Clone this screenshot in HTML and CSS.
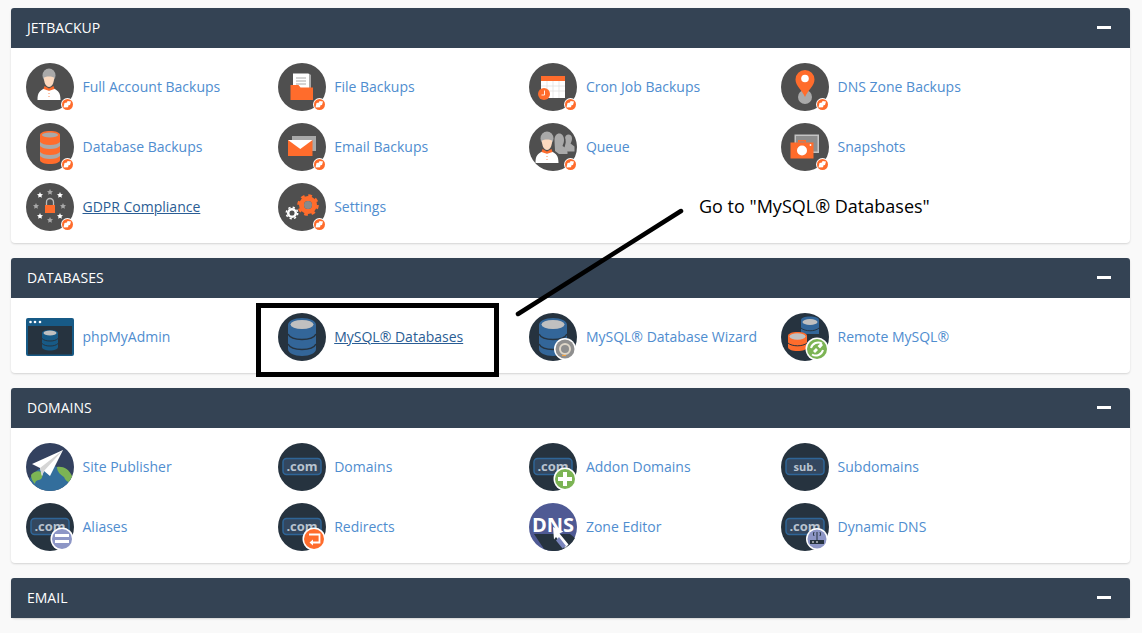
FILE: index.html
```html
<!DOCTYPE html>
<html lang="en">
<head>
    <meta charset="UTF-8">
    <title>cPanel - Tools</title>
    <link rel="stylesheet" href="styles.css">
</head>
<body>
    <svg class="defs" xmlns="http://www.w3.org/2000/svg">
        <symbol id="disc" viewBox="0 0 48 48"><circle cx="24" cy="24" r="24" fill="#4f4f4f"/></symbol>
        <symbol id="navy" viewBox="0 0 48 48"><circle cx="24" cy="24" r="24" fill="#26333f"/></symbol>
        <symbol id="badge" viewBox="0 0 48 48">
            <circle cx="41.500" cy="41.500" r="6.500" fill="#fff"/>
            <circle cx="41.500" cy="41.500" r="5.500" fill="#ff6c2c"/>
            <path d="M37.500 44.500l1-4.500 2.500-.5.500-1.500 3.500.5-1 3.500-1.500.3-.5 2z" fill="#fff"/>
        </symbol>
        <symbol id="person" viewBox="0 0 48 48">
            <ellipse cx="23" cy="12.500" rx="6.500" ry="7" fill="#a9a9a9"/>
            <path d="M18 14.500c2-1.500 8-1.500 10 0 .3 5-2 9.500-5 9.500s-5.300-4.500-5-9.500z" fill="#fbd9bf"/>
            <path d="M11.500 37c0-7 2-9.500 7-11.500l4.500 2 4.500-2c5 2 7 4.500 7 11.500z" fill="#fff"/>
            <path d="M18.500 23l4.500 2.500 4.500-2.500 1 3-4.500 1.500h-2l-4.500-1.500z" fill="#ff6c2c"/>
            <path d="M23 30v.8M23 33v.8" stroke="#ff6c2c" stroke-width="1"/>
        </symbol>
        <symbol id="db" viewBox="0 0 48 48">
            <path d="M10 12c0-4 6-7 14-7s14 3 14 7v24c0 4-6 7-14 7s-14-3-14-7z" fill="#336699"/>
            <ellipse cx="24" cy="11.500" rx="11.500" ry="4.500" fill="#c0c0c0"/>
            <path d="M10 21c2 4 8 5.500 14 5.500S36 25 38 21M10 31c2 4 8 5.500 14 5.500S36 35 38 31" fill="none" stroke="#26333f" stroke-width="1.500"/>
        </symbol>
        <symbol id="com" viewBox="0 0 48 48">
            <rect x="5" y="15.500" width="38" height="16" rx="3.500" fill="#33475f" stroke="#2f6597" stroke-width="1.500"/>
            <text x="24" y="28" class="svg-word">.com</text>
        </symbol>
        <symbol id="star" viewBox="0 0 10 10">
            <path d="M5 0l1.500 3.300 3.500.4-2.600 2.400.7 3.500L5 7.900 1.900 9.600l.7-3.500L0 3.700l3.500-.4z"/>
        </symbol>
    </svg>

    <section class="panel">
        <h2 class="panel-head"><span class="head-title">Jetbackup</span><span class="collapse"></span></h2>
        <div class="panel-body">
            <a class="item" href="#">
                <svg class="icon" viewBox="0 0 48 48"><use href="#disc"/><use href="#person"/><use href="#badge"/></svg>
                <span class="label">Full Account Backups</span>
            </a>
            <a class="item" href="#">
                <svg class="icon" viewBox="0 0 48 48"><use href="#disc"/>
                    <path d="M15 10h15l3 2v18H15z" fill="#a9a9a9"/><path d="M15 11h16v20H15z" fill="#fff"/>
                    <path d="M18 15h10M18 18h10M18 21h10" stroke="#aaa"/>
                    <path d="M12.500 22h8l2 2.500h12.500V37H12.500z" fill="#ff6c2c"/><use href="#badge"/></svg>
                <span class="label">File Backups</span>
            </a>
            <a class="item" href="#">
                <svg class="icon" viewBox="0 0 48 48"><use href="#disc"/>
                    <rect x="12" y="13" width="24" height="22" fill="#fff"/><rect x="12" y="13" width="24" height="5" fill="#ff6c2c"/>
                    <path d="M12 23h24M12 28h24M18 18v17M24 18v17M30 18v17" stroke="#ddd" stroke-width=".7"/>
                    <circle cx="15" cy="31" r="6" fill="#ff6c2c"/><path d="M15.500 27.500V32H12.500" fill="none" stroke="#fff" stroke-width=".9"/>
                    <use href="#badge"/></svg>
                <span class="label">Cron Job Backups</span>
            </a>
            <a class="item" href="#">
                <svg class="icon" viewBox="0 0 48 48"><use href="#disc"/>
                    <circle cx="24" cy="34" r="7" fill="#a9a9a9"/>
                    <path d="M24 34c-3-7-9.500-11-9.500-17.500a9.500 9.500 0 0 1 19 0C33.500 23 27 27 24 34z" fill="#ff6c2c"/>
                    <circle cx="24" cy="15.500" r="3.800" fill="#fff"/><use href="#badge"/></svg>
                <span class="label">DNS Zone Backups</span>
            </a>
            <a class="item" href="#">
                <svg class="icon" viewBox="0 0 48 48"><use href="#disc"/>
                    <path d="M14 12c0-2.500 4.500-4 10-4s10 1.500 10 4v25c0 2.500-4.500 4-10 4s-10-1.500-10-4z" fill="#ff6c2c"/>
                    <path d="M14 19c2 2 5 3 10 3s8-1 10-3v4c-2 2-5 3-10 3s-8-1-10-3zM14 29c2 2 5 3 10 3s8-1 10-3v4c-2 2-5 3-10 3s-8-1-10-3z" fill="#a9a9a9"/>
                    <ellipse cx="24" cy="12" rx="8" ry="2.600" fill="#a9a9a9"/>
                    <use href="#badge"/></svg>
                <span class="label">Database Backups</span>
            </a>
            <a class="item" href="#">
                <svg class="icon" viewBox="0 0 48 48"><use href="#disc"/>
                    <rect x="14" y="13" width="24" height="15" fill="#a9a9a9"/>
                    <rect x="10" y="17" width="24.500" height="16" fill="#ff6c2c"/>
                    <path d="M10 17h24.500L22.300 26z" fill="#fff"/>
                    <use href="#badge"/></svg>
                <span class="label">Email Backups</span>
            </a>
            <a class="item" href="#">
                <svg class="icon" viewBox="0 0 48 48"><use href="#disc"/>
                    <path d="M26 28c0-3-.5-7-.5-11 0-4 2-6.500 4.700-6.500s4.800 2.500 4.800 6.500c0 3-1 4.500-1.500 6l5 3v5H30z" fill="#a9a9a9"/>
                    <path d="M36 15.500c0-2.500 1.500-4 3.500-4s3.500 1.500 3.500 4c0 2.500-1 4-1.500 5l4 3v5h-7l-3-4 1-4c.5-1.500 0-2.500 0-5z" fill="#a9a9a9"/>
                    <use href="#person" x="-5" y="3"/>
                    <use href="#badge"/></svg>
                <span class="label">Queue</span>
            </a>
            <a class="item" href="#">
                <svg class="icon" viewBox="0 0 48 48"><use href="#disc"/>
                    <rect x="13.500" y="11.500" width="24.500" height="18.500" fill="#c4c4c4"/><rect x="15" y="13" width="21.500" height="15.500" fill="#8d8d8d"/>
                    <path d="M17 19.500v-2.500h8v2.500h-1.500v-1h-5v1z" fill="#ff6c2c"/>
                    <rect x="9.500" y="19.500" width="23" height="16" fill="#ff6c2c"/>
                    <circle cx="21" cy="27.500" r="5" fill="#fff"/><circle cx="29.500" cy="22" r=".9" fill="#fff"/>
                    <use href="#badge"/></svg>
                <span class="label">Snapshots</span>
            </a>
            <a class="item active" href="#">
                <svg class="icon" viewBox="0 0 48 48"><use href="#disc"/>
                    <use href="#star" x="11" y="9" width="6" height="6" fill="#fff"/>
                    <use href="#star" x="21" y="6" width="6" height="6" fill="#a9a9a9"/>
                    <use href="#star" x="31" y="9" width="6" height="6" fill="#fff"/>
                    <use href="#star" x="7" y="20" width="6" height="6" fill="#a9a9a9"/>
                    <use href="#star" x="34" y="20" width="6" height="6" fill="#a9a9a9"/>
                    <use href="#star" x="11" y="30" width="6" height="6" fill="#fff"/>
                    <use href="#star" x="21" y="34" width="6" height="6" fill="#a9a9a9"/>
                    <use href="#star" x="31" y="30" width="6" height="6" fill="#fff"/>
                    <path d="M20.500 22v-3a3.500 3.500 0 0 1 7 0v3" fill="none" stroke="#bbb" stroke-width="1.300"/>
                    <rect x="19" y="22" width="10" height="8" fill="#ff6c2c"/>
                    <use href="#badge"/></svg>
                <span class="label">GDPR Compliance</span>
            </a>
            <a class="item" href="#">
                <svg class="icon" viewBox="0 0 48 48"><use href="#disc"/>
                    <circle cx="30" cy="22" r="6.500" fill="none" stroke="#ff6c2c" stroke-width="5"/>
                    <circle cx="30" cy="22" r="9.500" fill="none" stroke="#ff6c2c" stroke-width="2.500" stroke-dasharray="3.730 3.730"/>
                    <circle cx="30" cy="22" r="4" fill="#8a8a8a"/>
                    <circle cx="14" cy="30" r="3.800" fill="none" stroke="#fff" stroke-width="2.500"/>
                    <circle cx="14" cy="30" r="5.700" fill="none" stroke="#fff" stroke-width="1.500" stroke-dasharray="2.240 2.240"/>
                    <use href="#badge"/></svg>
                <span class="label">Settings</span>
            </a>
        </div>
    </section>

    <section class="panel">
        <h2 class="panel-head"><span class="head-title">Databases</span><span class="collapse"></span></h2>
        <div class="panel-body">
            <a class="item" href="#">
                <svg class="icon" viewBox="0 0 48 48">
                    <rect y="5" width="48" height="38" rx="2" fill="#175a86"/><rect x="2" y="13" width="44" height="28.500" fill="#26333f"/>
                    <circle cx="4.500" cy="9" r="1.300" fill="#fff"/><circle cx="9" cy="9" r="1.300" fill="#fff"/><circle cx="14" cy="9" r="1.300" fill="#fff"/>
                    <path d="M16 20c0-2 3.500-3 8-3s8 1 8 3v14c0 2-3.500 3.500-8 3.500s-8-1.500-8-3.500z" fill="#175a86"/>
                    <ellipse cx="24" cy="20" rx="6.500" ry="2.500" fill="#c0c0c0"/>
                    <path d="M16 25.500c2 2 5 2.500 8 2.500s6-.5 8-2.500M16 30.500c2 2 5 2.500 8 2.500s6-.5 8-2.500" fill="none" stroke="#26333f"/>
                </svg>
                <span class="label">phpMyAdmin</span>
            </a>
            <a class="item active" href="#">
                <svg class="icon" viewBox="0 0 48 48"><use href="#navy"/><use href="#db"/></svg>
                <span class="label">MySQL® Databases</span>
            </a>
            <a class="item" href="#">
                <svg class="icon" viewBox="0 0 48 48"><use href="#navy"/><use href="#db"/>
                    <circle cx="36" cy="36" r="11" fill="#fff"/><circle cx="36" cy="36" r="9.500" fill="#8f8f8f"/>
                    <circle cx="36" cy="36" r="5" fill="none" stroke="#ded6c8" stroke-width="2"/>
                    <path d="M33 42.500h4" stroke="#f0a040" stroke-width="1.200"/>
                </svg>
                <span class="label">MySQL® Database Wizard</span>
            </a>
            <a class="item" href="#">
                <svg class="icon" viewBox="0 0 48 48"><use href="#navy"/>
                    <path d="M20 7c0-2 3.500-3.500 9-3.500s9 1.500 9 3.500v14H20z" fill="#336699"/>
                    <ellipse cx="29" cy="9" rx="7.500" ry="3" fill="#c0c0c0"/>
                    <path d="M20 15c2 2 6 2.800 9 2.800s7-.8 9-2.800" fill="none" stroke="#26333f"/>
                    <path d="M7 23c0-2.500 4-4 9.500-4s9.500 1.500 9.500 4v11c0 2.500-4 4-9.500 4S7 36.500 7 34z" fill="#ff6c2c"/>
                    <ellipse cx="16.500" cy="23.500" rx="8" ry="3.200" fill="#c0c0c0"/>
                    <path d="M7 30c2 2 6 2.800 9.500 2.800s7.500-.8 9.500-2.800" fill="none" stroke="#26333f"/>
                    <circle cx="36" cy="36" r="11.500" fill="#fff"/><circle cx="36" cy="36" r="10" fill="#7cb454"/>
                    <path d="M41 30.500a7.500 7.500 0 0 0-11 4.500M31 41.500a7.500 7.500 0 0 0 11-4.500" fill="none" stroke="#fff" stroke-width="2"/>
                    <path d="M36.500 33l3.500-3 2 2-3 3.500zM32 38l3-3 2 2-3 3z" fill="#fff"/>
                </svg>
                <span class="label">Remote MySQL®</span>
            </a>
        </div>
    </section>

    <section class="panel">
        <h2 class="panel-head"><span class="head-title">Domains</span><span class="collapse"></span></h2>
        <div class="panel-body">
            <a class="item" href="#">
                <svg class="icon" viewBox="0 0 48 48">
                    <clipPath id="round"><circle cx="24" cy="24" r="24"/></clipPath>
                    <circle cx="24" cy="24" r="24" fill="#33415f"/>
                    <g clip-path="url(#round)">
                        <circle cx="25" cy="47" r="24" fill="#336e9c"/>
                        <path d="M31 24c6-1 12 2 15 9 1 3 0 5-1 7-4-1-6-3-7-6-3-2-7-5-7-10zM5 32c2-3 7-5 10-3 2 3 2 7-2 8-2 0-4 1-4 4-2-2-4-5-4-9z" fill="#7cb454"/>
                    </g>
                    <path d="M6 21L37 7 24 33l-6-5-2 5-2-8z" fill="#fff"/>
                    <path d="M14 25L37 7 18 28l-2 5z" fill="#d5d5d5"/>
                </svg>
                <span class="label">Site Publisher</span>
            </a>
            <a class="item" href="#">
                <svg class="icon" viewBox="0 0 48 48"><use href="#navy"/><use href="#com"/></svg>
                <span class="label">Domains</span>
            </a>
            <a class="item" href="#">
                <svg class="icon" viewBox="0 0 48 48"><use href="#navy"/><use href="#com"/>
                    <circle cx="36" cy="36" r="11.500" fill="#fff"/><circle cx="36" cy="36" r="10" fill="#7cb454"/>
                    <path d="M34 29h4v5h5v4h-5v5h-4v-5h-5v-4h5z" fill="#fff"/>
                </svg>
                <span class="label">Addon Domains</span>
            </a>
            <a class="item" href="#">
                <svg class="icon" viewBox="0 0 48 48"><use href="#navy"/>
                    <rect x="5" y="15.500" width="38" height="16" rx="3.500" fill="#33475f" stroke="#2f6597" stroke-width="1.500"/>
                    <text x="24" y="28" class="svg-word sub">sub.</text>
                </svg>
                <span class="label">Subdomains</span>
            </a>
            <a class="item" href="#">
                <svg class="icon" viewBox="0 0 48 48"><use href="#navy"/><use href="#com"/>
                    <circle cx="36" cy="36" r="11.500" fill="#fff"/><circle cx="36" cy="36" r="10" fill="#8d96c6"/>
                    <path d="M29 32.500h14M29 38.500h14" stroke="#fff" stroke-width="3"/>
                </svg>
                <span class="label">Aliases</span>
            </a>
            <a class="item" href="#">
                <svg class="icon" viewBox="0 0 48 48"><use href="#navy"/><use href="#com"/>
                    <circle cx="36" cy="36" r="11.500" fill="#fff"/><circle cx="36" cy="36" r="10" fill="#ff6c2c"/>
                    <path d="M31 31.500h10.500v8H33" fill="none" stroke="#fff" stroke-width="1.800"/>
                    <path d="M35 36.500l-3.500 3 3.500 3z" fill="#fff"/>
                </svg>
                <span class="label">Redirects</span>
            </a>
            <a class="item" href="#">
                <svg class="icon" viewBox="0 0 48 48">
                    <circle cx="24" cy="24" r="24" fill="#4f5a94"/>
                    <path d="M5 31h36l5 4A24 24 0 0 1 15 46z" fill="#26333f"/>
                    <text x="24" y="29" class="svg-word dns">DNS</text>
                    <path d="M24 24l10.500 4.500-4 2 9 11-3.500 3.500-9-11-2 2.500z" fill="#fff"/>
                    <path d="M30 34l7 9-3.500 2.500-6.500-8z" fill="#7a85bd"/>
                </svg>
                <span class="label">Zone Editor</span>
            </a>
            <a class="item" href="#">
                <svg class="icon" viewBox="0 0 48 48"><use href="#navy"/><use href="#com"/>
                    <circle cx="36" cy="36" r="11" fill="#fff"/><circle cx="36" cy="36" r="9.500" fill="#8d96c6"/>
                    <rect x="29" y="37" width="14" height="4" fill="#26333f"/>
                    <path d="M36 37v-8M33 33a4 4 0 0 1 0-4M39 29a4 4 0 0 1 0 4" fill="none" stroke="#26333f"/>
                    <path d="M31 39h2M35 39h2" stroke="#fff"/>
                </svg>
                <span class="label">Dynamic DNS</span>
            </a>
        </div>
    </section>

    <section class="panel">
        <h2 class="panel-head"><span class="head-title">Email</span><span class="collapse"></span></h2>
    </section>

    <div class="callout-box"></div>
    <svg class="callout-line" width="170" height="110" viewBox="0 0 170 110">
        <path d="M3 106L166 3" stroke="#000" stroke-width="4.500" stroke-linecap="round"/>
    </svg>
    <div class="callout-text">Go to "MySQL® Databases"</div>
</body>
</html>
```

FILE: styles.css
```css
body {
    margin: 0;
    padding: 8px 12px 0 11px;
    height: 633px;
    box-sizing: border-box;
    overflow: hidden;
    position: relative;
    background-color: #f9f9f9;
    font-family: "Open Sans", sans-serif;
    font-size: 14px;
}

.defs {
    display: none;
}

.panel {
    margin-bottom: 15px;
    background-color: #fff;
    border-radius: 4px;
    box-shadow: 0 1px 2px rgba(0, 0, 0, 0.15);
}

.panel-head {
    display: flex;
    justify-content: space-between;
    align-items: center;
    height: 40px;
    margin: 0;
    padding: 0 19px 0 16px;
    background-color: #344354;
    border-radius: 3px 3px 0 0;
    color: #fff;
    font-size: 14px;
    font-weight: 400;
    text-transform: uppercase;
}

.head-title {
    margin-bottom: 2px;
}

.collapse {
    width: 14px;
    height: 3px;
    margin-bottom: 1px;
    background-color: #fff;
}

.panel-body {
    display: grid;
    grid-template-columns: repeat(4, 251.7px);
    row-gap: 12px;
    padding: 15px 15px 12px;
}

.item {
    display: flex;
    align-items: center;
    gap: 8.5px;
    color: #4f8dcf;
    text-decoration: none;
}

.label {
    margin-bottom: 2px;
}

.item.active {
    color: #2a5d94;
}

.item.active .label {
    text-decoration: underline;
}

.icon {
    width: 48px;
    height: 48px;
    flex-shrink: 0;
}

.svg-word {
    fill: #b9c3cf;
    font-family: "Open Sans", sans-serif;
    font-size: 13px;
    font-weight: 700;
    text-anchor: middle;
}

.svg-word.sub {
    font-size: 11px;
}

.svg-word.dns {
    fill: #fff;
    font-size: 20px;
}

/* annotations drawn over the screenshot */
.callout-box {
    position: absolute;
    left: 256px;
    top: 303px;
    width: 233px;
    height: 64px;
    border: 5px solid #000;
}

.callout-line {
    position: absolute;
    left: 515px;
    top: 208px;
}

.callout-text {
    position: absolute;
    left: 699px;
    top: 194px;
    color: #000;
    font-size: 18px;
}
```
